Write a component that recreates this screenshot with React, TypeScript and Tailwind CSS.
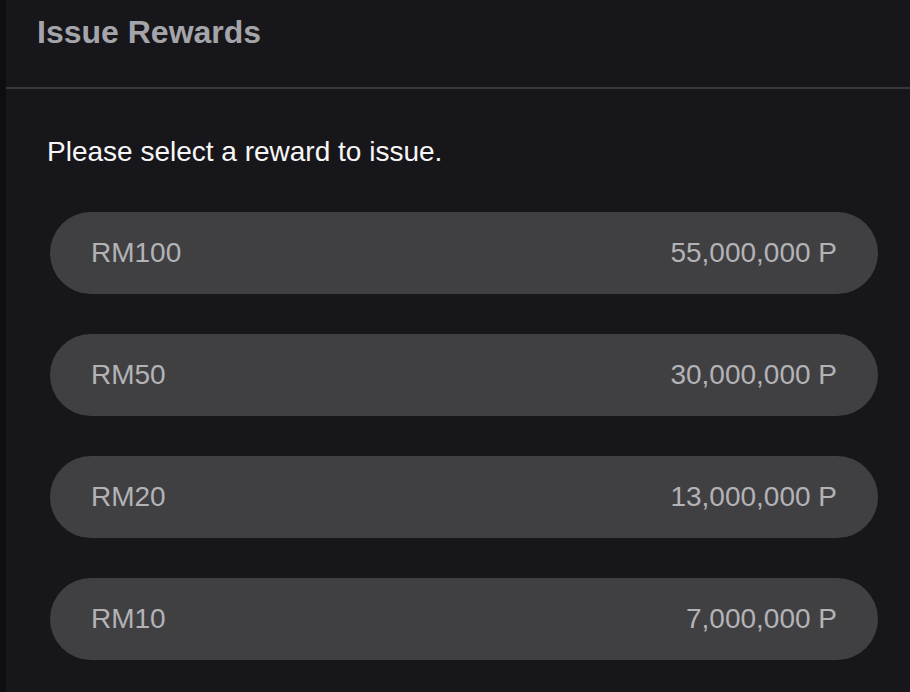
import React from "react";

const rewards = [
  { name: "RM100", points: "55,000,000 P" },
  { name: "RM50", points: "30,000,000 P" },
  { name: "RM20", points: "13,000,000 P" },
  { name: "RM10", points: "7,000,000 P" },
];

export default function App() {
  return (
    <div
      className="flex h-[692px] w-[910px] overflow-hidden bg-[#0e0e11]"
      style={{ fontFamily: '"Liberation Sans", Arial, Helvetica, sans-serif' }}
    >
      <div className="ml-[6px] flex flex-1 flex-col bg-[#17161b]">
        <div className="h-[87px] pl-[31px] pt-[16px]">
          <h1 className="text-[32px] font-bold leading-none text-[#a4a4a9]">Issue Rewards</h1>
        </div>
        <div className="h-[2px] bg-[#38383b]" />
        <div className="flex flex-col pl-[41px] pr-[32px] pt-[49px]">
          <p className="text-[28px] leading-none text-[#f7f7f7]">Please select a reward to issue.</p>
          <div className="mt-[46px] ml-[3px] flex flex-col gap-[40px]">
            {rewards.map((r) => (
              <button
                key={r.name}
                className="flex h-[82px] items-center justify-between rounded-full bg-[#404043] px-[41px] text-[28px] leading-none text-[#b3b3b6]"
              >
                <span>{r.name}</span>
                <span>{r.points}</span>
              </button>
            ))}
          </div>
        </div>
      </div>
    </div>
  );
}
